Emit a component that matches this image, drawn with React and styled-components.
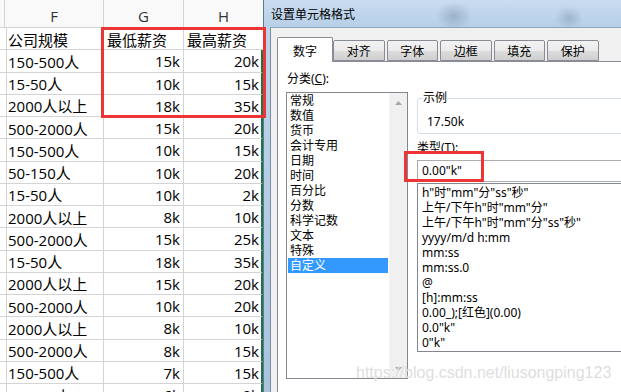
import React from "react";
import styled, { createGlobalStyle } from "styled-components";

const rows = [
    ["150-500人", "15k", "20k"],
    ["15-50人", "10k", "15k"],
    ["2000人以上", "18k", "35k"],
    ["500-2000人", "15k", "20k"],
    ["150-500人", "10k", "15k"],
    ["50-150人", "10k", "20k"],
    ["15-50人", "10k", "2k"],
    ["2000人以上", "8k", "10k"],
    ["500-2000人", "15k", "25k"],
    ["15-50人", "18k", "35k"],
    ["2000人以上", "15k", "20k"],
    ["500-2000人", "10k", "20k"],
    ["2000人以上", "8k", "10k"],
    ["500-2000人", "8k", "15k"],
    ["150-500人", "7k", "15k"],
    ["50-150人", "6k", "9k"],
];

const tabs = ["数字", "对齐", "字体", "边框", "填充", "保护"];

const categories = [
    "常规",
    "数值",
    "货币",
    "会计专用",
    "日期",
    "时间",
    "百分比",
    "分数",
    "科学记数",
    "文本",
    "特殊",
    "自定义",
];

const formats = [
    'h"时"mm"分"ss"秒"',
    '上午/下午h"时"mm"分"',
    '上午/下午h"时"mm"分"ss"秒"',
    "yyyy/m/d h:mm",
    "mm:ss",
    "mm:ss.0",
    "@",
    "[h]:mm:ss",
    "0.00_);[红色](0.00)",
    '0.0"k"',
    '0"k"',
];

export default function App() {
    return (
        <>
            <GlobalStyle />
            <Page>
                <Sheet>
                    <HeadCell />
                    <HeadCell>F</HeadCell>
                    <HeadCell>G</HeadCell>
                    <HeadCell $last>H</HeadCell>

                    <Cell />
                    <Cell>公司规模</Cell>
                    <Cell>最低薪资</Cell>
                    <Cell $last>最高薪资</Cell>

                    {rows.map((r, i) => (
                        <React.Fragment key={i}>
                            <Cell />
                            <Cell>{r[0]}</Cell>
                            <Cell $right>{r[1]}</Cell>
                            <Cell $right $last $sel>
                                {r[2]}
                            </Cell>
                        </React.Fragment>
                    ))}
                </Sheet>

                <Dialog>
                    <TitleBar>设置单元格格式</TitleBar>
                    <Body>
                        <TabRow>
                            {tabs.map((t, i) => (
                                <Tab key={t} $active={i === 0}>
                                    {t}
                                </Tab>
                            ))}
                        </TabRow>
                        <Panel>
                            <LeftCol>
                                <Label>
                                    分类(<u>C</u>):
                                </Label>
                                <ListBox>
                                    <Items>
                                        {categories.map((c, i) => (
                                            <Item
                                                key={c}
                                                $selected={
                                                    i === categories.length - 1
                                                }
                                            >
                                                {c}
                                            </Item>
                                        ))}
                                    </Items>
                                    <ScrollBar>
                                        <svg width="7" height="4" viewBox="0 0 7 4">
                                            <polygon points="3.5,0 7,4 0,4" fill="#a8a8a8" />
                                        </svg>
                                        <svg width="7" height="4" viewBox="0 0 7 4">
                                            <polygon points="0,0 7,0 3.5,4" fill="#a8a8a8" />
                                        </svg>
                                    </ScrollBar>
                                </ListBox>
                            </LeftCol>

                            <RightCol>
                                <Group>
                                    <Legend>示例</Legend>
                                    <Sample>17.50k</Sample>
                                </Group>
                                <TypeLabel>
                                    类型(<u>T</u>):
                                </TypeLabel>
                                <TypeInput>0.00"k"</TypeInput>
                                <FormatList>
                                    {formats.map((f) => (
                                        <FormatItem key={f}>{f}</FormatItem>
                                    ))}
                                </FormatList>
                            </RightCol>
                        </Panel>
                    </Body>
                </Dialog>

                {/* annotation boxes drawn over the screenshot */}
                <RedBox style={{ left: 101, top: 27, width: 165, height: 91 }} />
                <RedBox style={{ left: 404, top: 151, width: 80, height: 31 }} />
                <Watermark>https://blog.csdn.net/liusongping123</Watermark>
            </Page>
        </>
    );
}

const GlobalStyle = createGlobalStyle`
    body {
        margin: 0;
        overflow: hidden;
        background: #fff;
    }
`;

const Page = styled.div`
    position: relative;
    display: flex;
    width: 621px;
    height: 392px;
    overflow: hidden;
`;

//spreadsheet
const Sheet = styled.div`
    flex: none;
    width: 263px;
    display: grid;
    grid-template-columns: 5px 99px 80px 79px;
    grid-template-rows: 28px;
    grid-auto-rows: 22.25px;
    align-content: start;
    background: #fff;
    font-family: "Open Sans", "Noto Sans CJK SC", sans-serif;
    font-size: 15px;
    color: #000;
`;

const Cell = styled.div`
    display: flex;
    align-items: center;
    justify-content: ${(p) => (p.$right ? "flex-end" : "flex-start")};
    padding: 1px ${(p) => (p.$last ? "2px" : "3px")} 0 3px;
    border-right: ${(p) =>
        p.$sel ? "2px solid #217346" : p.$last ? "none" : "1px solid #d4d4d4"};
    border-bottom: 1px solid #d4d4d4;
    white-space: nowrap;
    overflow: hidden;
    box-sizing: border-box;
`;

const HeadCell = styled(Cell)`
    justify-content: center;
    padding: 5px 0 0;
    background: #f9f9f9;
    color: #333;
    font-size: 15px;
`;

//dialog
const Dialog = styled.div`
    flex: 1;
    display: flex;
    flex-direction: column;
    min-width: 0;
    background: linear-gradient(180deg, #bfd5ec 0%, #a9c3de 100%);
    border-left: 1px solid #5f7894;
    font-family: "Noto Sans", "Noto Sans CJK SC", sans-serif;
    font-size: 12px;
    color: #000;
`;

const TitleBar = styled.div`
    flex: none;
    height: 27px;
    display: flex;
    align-items: center;
    padding-left: 7px;
    background: radial-gradient(ellipse 18px 14px at 190px 16px, rgba(90, 115, 140, 0.35), transparent),
        radial-gradient(ellipse 14px 12px at 305px 18px, rgba(90, 115, 140, 0.3), transparent),
        linear-gradient(180deg, #c9dcef 0%, #b6cfe8 100%);
    white-space: nowrap;
`;

const Body = styled.div`
    flex: 1;
    display: flex;
    flex-direction: column;
    margin-left: 6px;
    padding: 9px 0 0 6px;
    background: #f0f0f0;
    border-left: 1px solid #7d8d9f;
    border-top: 1px solid #8fa6bd;
    min-height: 0;
`;

const TabRow = styled.div`
    flex: none;
    display: flex;
    align-items: flex-end;
    gap: 2px;
    height: 24px;
`;

const Tab = styled.div`
    flex: none;
    display: flex;
    align-items: center;
    justify-content: center;
    box-sizing: border-box;
    width: ${(p) => (p.$active ? "56px" : "51.5px")};
    height: ${(p) => (p.$active ? "25px" : "21px")};
    margin-bottom: ${(p) => (p.$active ? "-1px" : "0")};
    margin-right: ${(p) => (p.$active ? "-2px" : "0")};
    padding-top: ${(p) => (p.$active ? "2px" : "0")};
    border: 1px solid #898c95;
    border-bottom: ${(p) => (p.$active ? "none" : "1px solid #898c95")};
    border-radius: 2px 2px 0 0;
    background: ${(p) =>
        p.$active
            ? "#fff"
            : "linear-gradient(180deg, #f2f2f2 0%, #ebebeb 50%, #dddddd 51%, #cfcfcf 100%)"};
    position: relative;
    z-index: ${(p) => (p.$active ? 1 : 0)};
`;

const Panel = styled.div`
    flex: 1;
    display: flex;
    gap: 9px;
    padding: 9px 0 0 8px;
    background: #fff;
    border: 1px solid #898c95;
    border-right: none;
    border-bottom: none;
    overflow: hidden;
`;

const LeftCol = styled.div`
    flex: none;
    width: 122px;
    display: flex;
    flex-direction: column;
`;

const Label = styled.div`
    height: 16px;
    line-height: 16px;
    padding-left: 1px;
    margin-bottom: 5px;
    white-space: nowrap;
`;

const ListBox = styled.div`
    display: flex;
    height: 287px;
    box-sizing: border-box;
    border: 1px solid #828790;
    background: #fff;
`;

const Items = styled.div`
    flex: 1;
    padding: 0 1px;
`;

const Item = styled.div`
    height: 15px;
    line-height: 15px;
    padding-left: 2px;
    white-space: nowrap;
    background: ${(p) => (p.$selected ? "#3399ff" : "transparent")};
    color: ${(p) => (p.$selected ? "#fff" : "#000")};
`;

const ScrollBar = styled.div`
    flex: none;
    width: 17px;
    display: flex;
    flex-direction: column;
    align-items: center;
    justify-content: space-between;
    padding: 8px 0 7px;
    background: #f0f0f0;
    border-left: 1px solid #f4f4f4;
`;

const RightCol = styled.div`
    flex: none;
    width: 240px;
    display: flex;
    flex-direction: column;
`;

const Group = styled.fieldset`
    margin: 19px 0 0;
    padding: 0 0 3px 5px;
    border: 1px solid #d5dfe5;
    border-radius: 3px;
    min-width: 0;
`;

const Legend = styled.legend`
    padding: 0;
    line-height: 16px;
`;

const Sample = styled.div`
    line-height: 16px;
    padding: 8px 0 0 4px;
`;

const TypeLabel = styled.div`
    line-height: 16px;
    margin-top: 6px;
    white-space: nowrap;
`;

const TypeInput = styled.div`
    margin-top: 4px;
    height: 22px;
    box-sizing: border-box;
    line-height: 20px;
    padding: 0 4px;
    border: 1px solid #abadb3;
    white-space: nowrap;
`;

const FormatList = styled.div`
    margin-top: 1px;
    height: 169px;
    box-sizing: border-box;
    padding-top: 1px;
    border: 1px solid #828790;
`;

const FormatItem = styled.div`
    height: 15px;
    line-height: 15px;
    padding-left: 4px;
    white-space: nowrap;
`;

const RedBox = styled.div`
    position: absolute;
    box-sizing: border-box;
    border: 3px solid #ee3535;
    pointer-events: none;
`;

const Watermark = styled.div`
    position: absolute;
    left: 356px;
    top: 364px;
    font-family: "Liberation Sans", Arial, sans-serif;
    font-size: 16px;
    line-height: 18px;
    color: rgba(210, 210, 210, 0.75);
    text-shadow: 0 0 1px rgba(255, 255, 255, 0.9);
    white-space: nowrap;
    pointer-events: none;
`;
